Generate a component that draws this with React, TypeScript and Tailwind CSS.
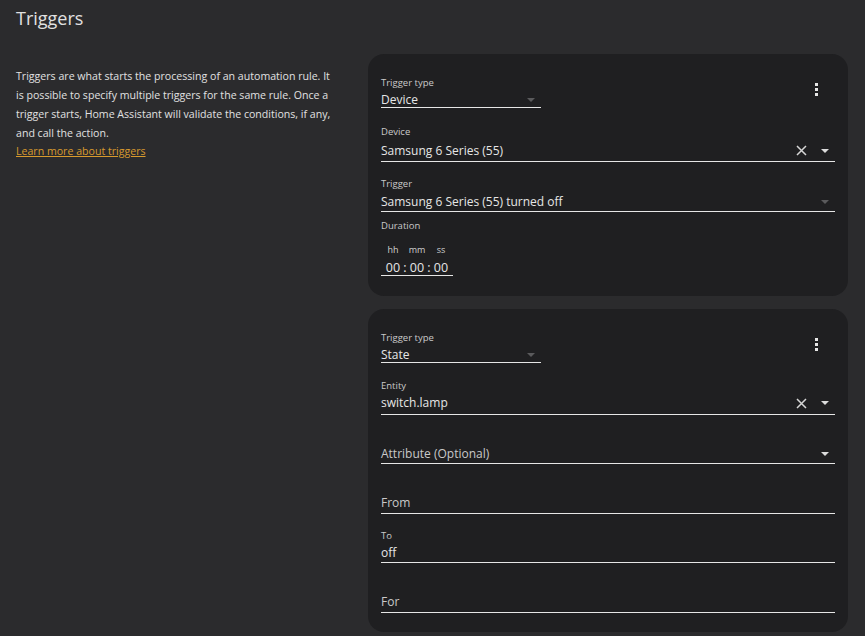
import React from "react";

const FONT = { fontFamily: '"Open Sans", "Noto Sans", sans-serif' };

function Caret({ dim }: { dim?: boolean }) {
  return (
    <svg width="8" height="4" viewBox="0 0 8 4" className="shrink-0">
      <path d="M0 0 L8 0 L4 4 Z" fill={dim ? "#5a5a5c" : "#dcdcdc"} />
    </svg>
  );
}

function ClearX() {
  return (
    <svg width="11" height="11" viewBox="0 0 11 11" className="shrink-0">
      <path d="M1 1 L10 10 M10 1 L1 10" stroke="#d6d6d6" strokeWidth="1.5" />
    </svg>
  );
}

function Dots() {
  return (
    <div className="flex flex-col gap-[2px] w-[3px] mt-[6px] mr-[17px]">
      <span className="block w-[3px] h-[3px] bg-[#e6e6e6]" />
      <span className="block w-[3px] h-[3px] bg-[#e6e6e6]" />
      <span className="block w-[3px] h-[3px] bg-[#e6e6e6]" />
    </div>
  );
}

function Label({ children, mt }: { children: React.ReactNode; mt: string }) {
  return <div className={`${mt} text-[9.5px] leading-[12px] text-[#c9c9c9]`}>{children}</div>;
}

export default function App() {
  return (
    <div className="w-full h-[636px] bg-[#2b2b2d] overflow-hidden text-[#e6e6e6]" style={FONT}>
      <div className="pl-4 pt-[6px] h-[30px] text-[18px] leading-[24px] text-[#e1e1e1]">Triggers</div>
      <div className="flex mt-[24px]">
        <div className="w-[368px] shrink-0 pl-4 pr-[32px] pt-[13px] text-[10.6px] leading-[19px] text-[#e1e1e1]">
          Triggers are what starts the processing of an automation rule. It is possible to specify multiple triggers for
          the same rule. Once a trigger starts, Home Assistant will validate the conditions, if any, and call the action.
          <div className="-mt-[1px]">
            <a className="underline text-[#d89a2d]">Learn more about triggers</a>
          </div>
        </div>

        <div className="w-[480px] flex flex-col gap-[13px]">
          {/* Card 1 */}
          <div className="bg-[#1f1f21] rounded-[16px] pl-[13px] pr-[13px] pt-[23px] pb-[20px]">
            <div className="flex justify-between">
              <div className="w-[160px]">
                <Label mt="mt-0">Trigger type</Label>
                <div className="flex items-center justify-between h-[19px] pt-[3px] border-b border-[#e6e6e6] text-[12px] pr-[6px]">
                  <span>Device</span>
                  <Caret dim />
                </div>
              </div>
              <Dots />
            </div>
            <Label mt="mt-[18px]">Device</Label>
            <div className="flex items-center h-[24px] pt-[2px] border-b border-[#e6e6e6] text-[12px]">
              <span className="flex-1">Samsung 6 Series (55)</span>
              <ClearX />
              <span className="ml-[14px] mr-[6px] flex">
                <Caret />
              </span>
            </div>
            <Label mt="mt-[16px]">Trigger</Label>
            <div className="flex items-center h-[22px] pt-[2px] border-b border-[#e6e6e6] text-[12px]">
              <span className="flex-1">Samsung 6 Series (55) turned off</span>
              <span className="mr-[6px] flex">
                <Caret dim />
              </span>
            </div>
            <Label mt="mt-[8px]">Duration</Label>
            <div className="w-[72px] mt-[12px]">
              <div className="flex text-[9px] leading-[12px] text-[#cfcfcf] pl-[3px]">
                <span className="w-[18px] text-center">hh</span>
                <span className="w-[6px]" />
                <span className="w-[18px] text-center">mm</span>
                <span className="w-[6px]" />
                <span className="w-[18px] text-center">ss</span>
              </div>
              <div className="mt-[4px] h-[16px] pl-[3px] border-b border-[#e6e6e6] flex items-center text-[12.5px] leading-[16px]">
                <span className="w-[18px] text-center">00</span>
                <span className="w-[6px] text-center">:</span>
                <span className="w-[18px] text-center">00</span>
                <span className="w-[6px] text-center">:</span>
                <span className="w-[18px] text-center">00</span>
              </div>
            </div>
          </div>

          {/* Card 2 */}
          <div className="bg-[#1f1f21] rounded-[16px] pl-[13px] pr-[13px] pt-[23px] pb-[19px]">
            <div className="flex justify-between">
              <div className="w-[160px]">
                <Label mt="mt-0">Trigger type</Label>
                <div className="flex items-center justify-between h-[19px] pt-[3px] border-b border-[#e6e6e6] text-[12px] pr-[6px]">
                  <span>State</span>
                  <Caret dim />
                </div>
              </div>
              <Dots />
            </div>
            <Label mt="mt-[17px]">Entity</Label>
            <div className="flex items-center h-[23px] border-b border-[#e6e6e6] text-[12px]">
              <span className="flex-1">switch.lamp</span>
              <ClearX />
              <span className="ml-[14px] mr-[6px] flex">
                <Caret />
              </span>
            </div>
            <div className="mt-[27px] flex items-center h-[22px] pt-[3px] border-b border-[#e6e6e6] text-[12px] text-[#c9c9c9]">
              <span className="flex-1">Attribute (Optional)</span>
              <span className="mr-[6px] flex">
                <Caret />
              </span>
            </div>
            <div className="mt-[28px] flex items-center h-[22px] pt-[1px] border-b border-[#e6e6e6] text-[12px] text-[#c9c9c9]">
              From
            </div>
            <Label mt="mt-[16px]">To</Label>
            <div className="flex items-center h-[21px] pt-[1px] border-b border-[#e6e6e6] text-[12px]">off</div>
            <div className="mt-[28px] flex items-center h-[22px] pt-[1px] border-b border-[#e6e6e6] text-[12px] text-[#c9c9c9]">
              For
            </div>
          </div>
        </div>
      </div>
    </div>
  );
}
